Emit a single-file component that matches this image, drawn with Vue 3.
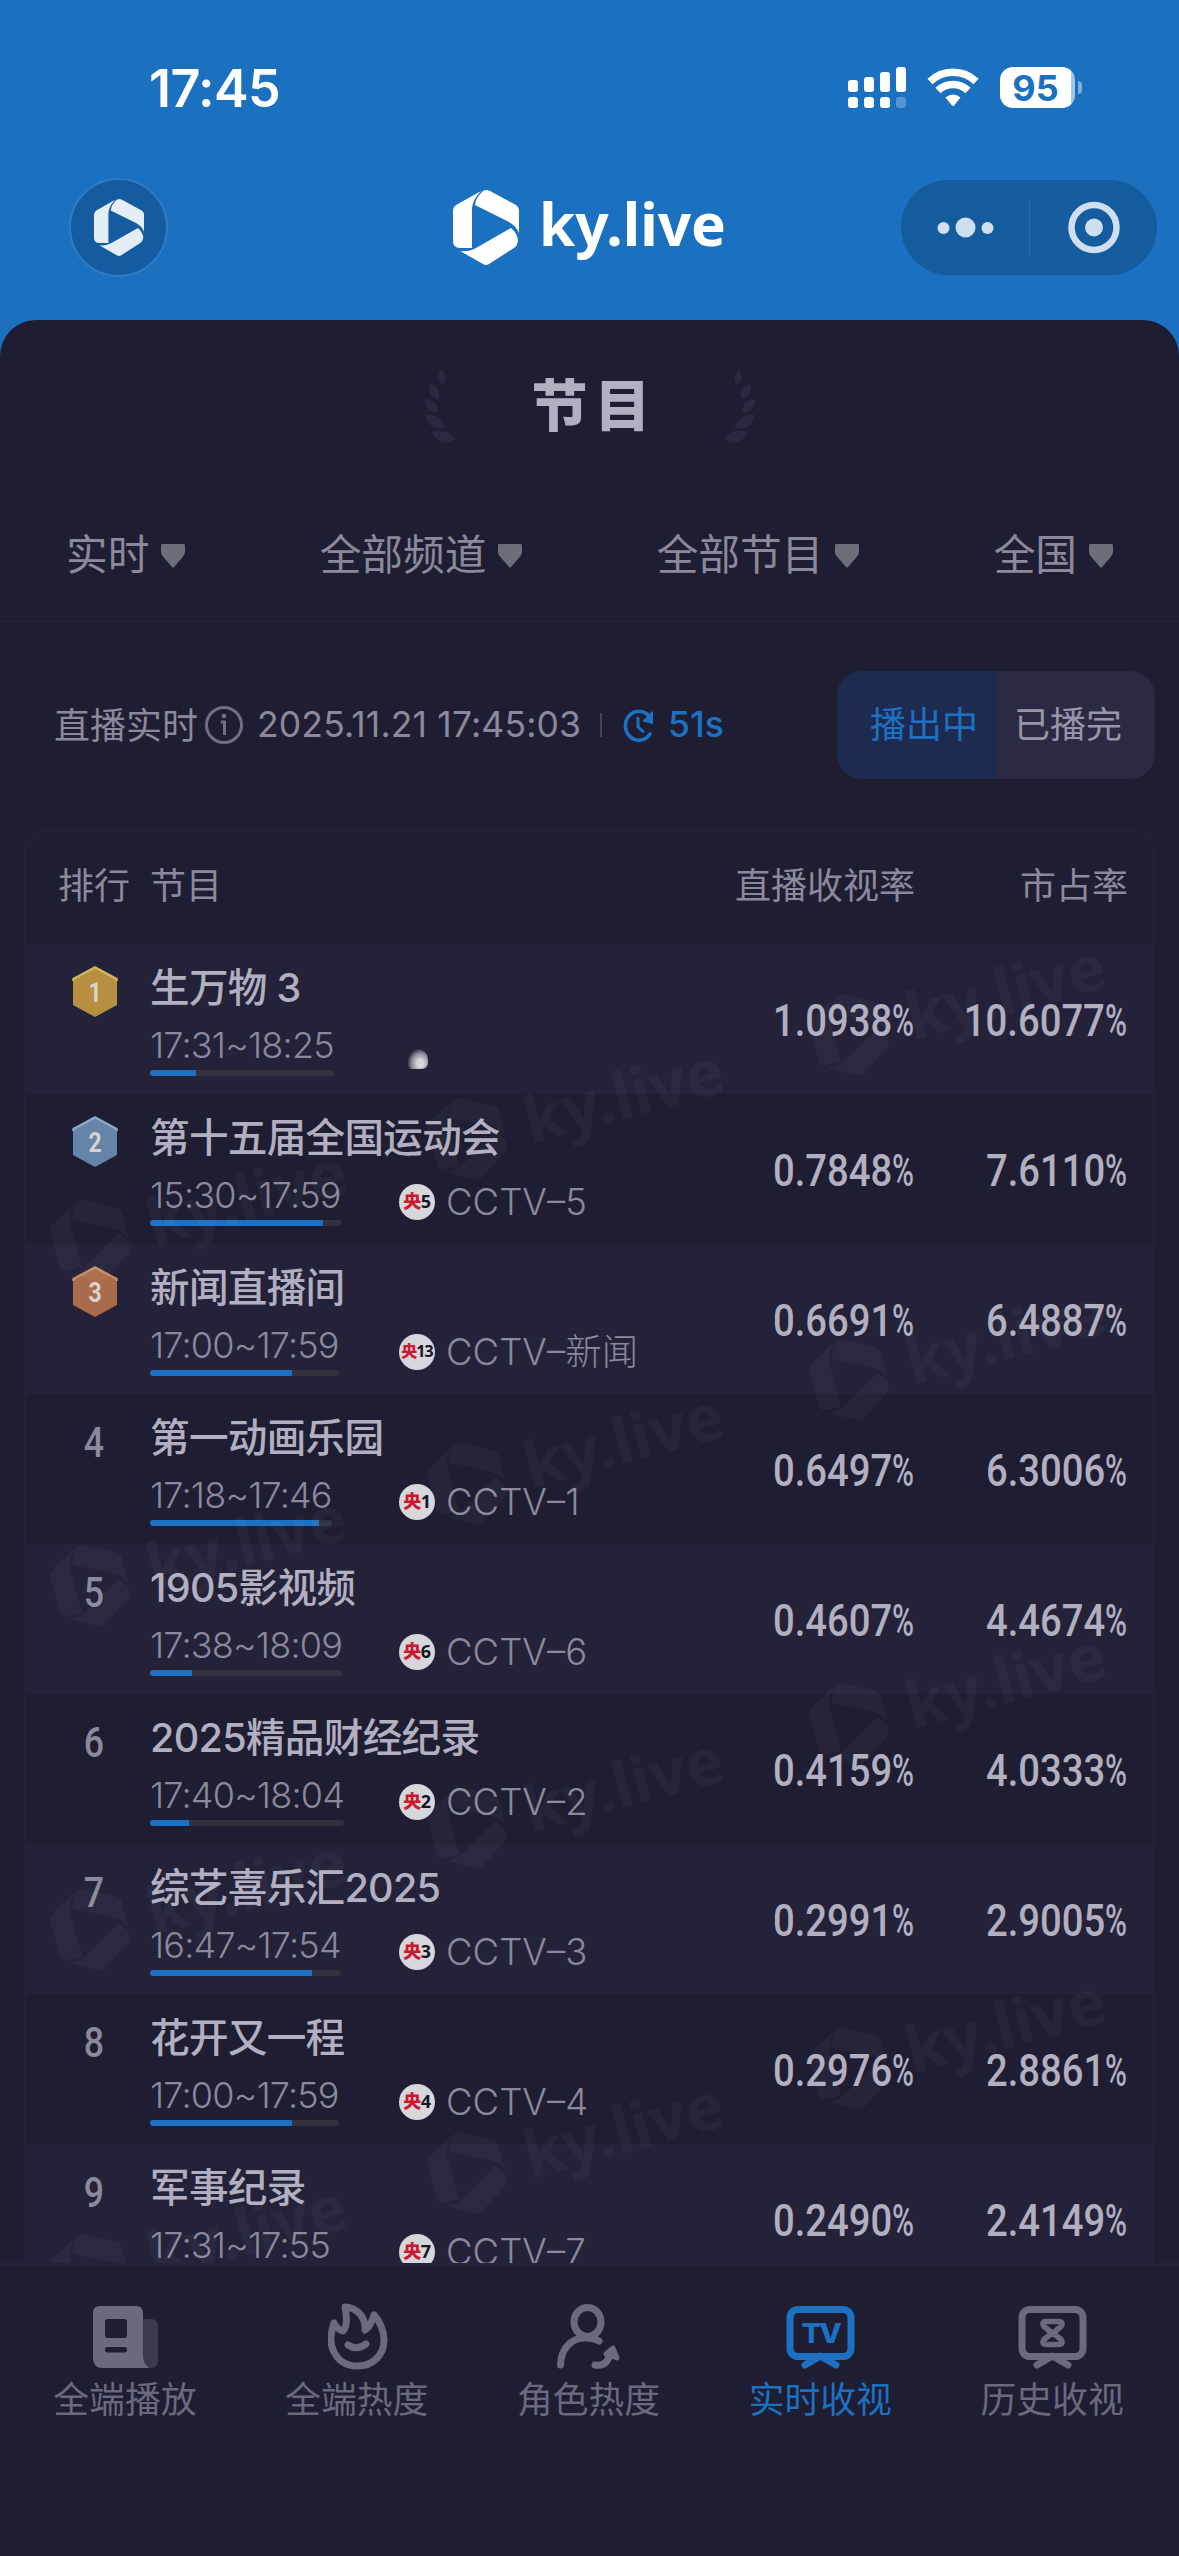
<template>
    <div class="screen">
        <svg class="defs" width="0" height="0">
            <symbol id="logo" viewBox="0 0 66 75">
                <path d="M28 1 L3 15 Q0 17 0 21 V51 Q0 58 7 58 H19 V18 Q20 9 28 1Z" />
                <path d="M30 1 Q33 -1 37 1 L63 15 Q66 17 66 20 V43 Q63 36 56 32 L22 15 Q23 7 30 1Z" />
                <path d="M58 38 Q64 43 65 50 Q65 55 61 58 L36 74 Q33 76 30 74 L7 61 Q16 62 23 58Z" />
            </symbol>
        </svg>

        <header class="top">
            <div class="status-bar">
                <span class="clock">17:45</span>
                <div class="status-icons">
                    <svg width="58" height="41" viewBox="0 0 58 41" fill="#fff">
                        <rect x="0" y="13" width="10" height="12" rx="3" />
                        <rect x="16" y="10" width="10" height="15" rx="3" />
                        <rect x="32" y="5" width="10" height="20" rx="3" />
                        <rect x="48" y="0" width="10" height="25" rx="3" />
                        <rect x="0" y="30" width="10" height="11" rx="3" />
                        <rect x="16" y="30" width="10" height="11" rx="3" />
                        <rect x="32" y="30" width="10" height="11" rx="3" />
                        <rect x="48" y="30" width="10" height="11" rx="3" opacity=".25" />
                    </svg>
                    <svg class="wifi" width="52" height="40" viewBox="0 0 52 40">
                        <g fill="none" stroke="#fff" stroke-width="7.5">
                            <path d="M3 13.500 A33 33 0 0 1 49 13.500" />
                            <path d="M11 22.500 A21.500 21.500 0 0 1 41 22.500" />
                        </g>
                        <path d="M18.500 29.500 Q26 23.500 33.500 29.500 L27.500 37 Q26 39 24.500 37Z" fill="#fff" />
                    </svg>
                    <div class="battery"><span>95</span></div>
                    <i class="battery-nub"></i>
                </div>
            </div>
            <div class="nav-bar">
                <div class="home-btn">
                    <svg width="50" height="57"><use href="#logo" /></svg>
                </div>
                <div class="brand">
                    <svg width="66" height="75"><use href="#logo" /></svg>
                    <span>ky.live</span>
                </div>
                <div class="capsule">
                    <svg width="256" height="95" viewBox="0 0 256 95">
                        <g fill="#cfdff0">
                            <circle cx="42.500" cy="48" r="6" />
                            <circle cx="64.500" cy="47.500" r="10" />
                            <circle cx="86.500" cy="48" r="6" />
                            <circle cx="193" cy="47.500" r="9" />
                        </g>
                        <path d="M128.500 18 V76" stroke="#2768a8" stroke-width="1" />
                        <circle cx="193" cy="47.500" r="22.500" fill="none" stroke="#cfdff0" stroke-width="6.500" />
                    </svg>
                </div>
            </div>
        </header>

        <main class="panel">
            <div class="title">
                <svg width="34" height="76" viewBox="0 0 34 76" class="laurel">
                    <path v-for="leaf in leaves" :key="leaf" :d="leaf" />
                </svg>
                <h1>节目</h1>
                <svg width="34" height="76" viewBox="0 0 34 76" class="laurel laurel-right">
                    <path v-for="leaf in leaves" :key="leaf" :d="leaf" />
                </svg>
            </div>

            <div class="filters">
                <div class="filter" v-for="item in filters" :key="item">
                    <span>{{ item }}</span>
                    <svg width="24" height="24" viewBox="0 0 24 24">
                        <path d="M1 0 H23 L24 1 V8 Q24 10 22.500 12 L13 23 Q12 24 11 23 L1.500 12 Q0 10 0 8 V1Z" fill="#6c6f7a" />
                    </svg>
                </div>
            </div>

            <div class="live-bar">
                <span class="live-label">直播实时</span>
                <svg class="info-icon" width="40" height="40" viewBox="0 0 40 40">
                    <circle cx="20" cy="20" r="17.500" fill="none" stroke="#706e80" stroke-width="3" />
                    <circle cx="20" cy="11" r="2.300" fill="#706e80" />
                    <path d="M17 17 H20.500 V30" fill="none" stroke="#706e80" stroke-width="3" />
                </svg>
                <span class="live-time">2025.11.21 17:45:03</span>
                <i class="live-split"></i>
                <svg class="refresh" width="32" height="34" viewBox="0 0 32 34">
                    <g fill="none" stroke="#1d71c2" stroke-width="3.600" stroke-linecap="round">
                        <path d="M26 8 A13.500 14.500 0 1 0 27 26" />
                        <path d="M15 10 V19 L20 23.500" stroke-width="3" />
                    </g>
                    <path d="M29.500 3.500 V15.500 L20 13Z" fill="#1d71c2" stroke="#1d71c2" stroke-linejoin="round" />
                </svg>
                <span class="countdown">51s</span>
                <div class="toggle">
                    <span class="toggle-item active">播出中</span>
                    <span class="toggle-item">已播完</span>
                </div>
            </div>

            <div class="table">
                <div class="table-head">
                    <span class="head-rank">排行</span>
                    <span class="head-name">节目</span>
                    <span>直播收视率</span>
                    <span class="head-share">市占率</span>
                </div>
                <div class="row" v-for="(item, index) in programs" :key="item.name">
                    <div class="rank">
                        <div v-if="index < 3" class="badge">
                            <svg width="46" height="52" viewBox="0 0 46 52">
                                <path d="M23 1 L45 13 V39 L23 51 L1 39 V13Z" :fill="medals[index].fill" />
                                <path d="M1.500 15 V13 L23 1.500 L44.500 13 V15" fill="none" :stroke="medals[index].edge" stroke-width="2.500" />
                            </svg>
                            <span>{{ index + 1 }}</span>
                        </div>
                        <span v-else class="rank-num">{{ index + 1 }}</span>
                    </div>
                    <div class="info">
                        <div class="name">{{ item.name }}</div>
                        <div class="meta">
                            <div class="time-col">
                                <div class="time">
                                    {{ item.time }}
                                    <div class="bar"><div class="bar-fill" :style="{ width: item.progress + '%' }"></div></div>
                                </div>
                            </div>
                            <div class="channel" v-if="item.channel">
                                <span class="channel-logo" :class="{ small: item.no.length > 1 }"><b>央</b>{{ item.no }}</span>
                                <span class="channel-name">{{ item.channel }}</span>
                            </div>
                            <i class="logo-loading" v-else></i>
                        </div>
                    </div>
                    <div class="num rate"><span>{{ item.rate }}<i>%</i></span></div>
                    <div class="num share"><span>{{ item.share }}<i>%</i></span></div>
                </div>
                <div class="watermark" v-for="mark in watermarks" :key="mark.x + '_' + mark.y" :style="{ left: mark.x + 'px', top: mark.y + 'px' }">
                    <svg width="74" height="84"><use href="#logo" /></svg>
                    <span>ky.live</span>
                </div>
            </div>
        </main>

        <footer class="tab-bar">
            <div class="tab">
                <svg width="66" height="68" viewBox="0 -3 66 68">
                    <path d="M50 13 H58 Q65 13 65 20 V55 Q65 62 58 62 H50Z" fill="#3b394e" />
                    <path fill-rule="evenodd" d="M7 0 H43 Q50 0 50 7 V50 Q50 57 56 62 H10 Q0 62 0 52 V7 Q0 0 7 0Z M15 13 Q12 13 12 16 V29 Q12 32 15 32 H31 Q34 32 34 29 V16 Q34 13 31 13Z M14.500 41 Q12 41 12 44 Q12 46.500 14.500 46.500 H31.500 Q34 46.500 34 44 Q34 41 31.500 41Z" fill="currentColor" />
                </svg>
                <span>全端播放</span>
            </div>
            <div class="tab">
                <svg width="60" height="68" viewBox="0 0 60 68" class="line">
                    <path d="M6 20 C2 32 2 42 6 49 C11 59 20 63 29 63 C45 63 56 52 56 37 C56 27 51 17 46 12 C44 18 42 24 37 27 C38 15 30 5 17 4 C19 14 19 24 15 28 C11 27 8 24 6 20Z" />
                    <path d="M20 42 Q29 48 38 41" />
                </svg>
                <span>全端热度</span>
            </div>
            <div class="tab">
                <svg width="64" height="68" viewBox="0 -2 64 68" class="line">
                    <ellipse cx="30.500" cy="17" rx="13.500" ry="14.500" />
                    <path d="M3.500 60 C4 42 16 32 30 33 Q37 33 42 36" />
                    <path d="M38 60 Q50 62 53 49" />
                    <path d="M56 43 L49 49 L60 53Z" fill="currentColor" stroke-width="5" />
                </svg>
                <span>角色热度</span>
            </div>
            <div class="tab active">
                <svg width="70" height="68" viewBox="0 -3 70 68" class="line">
                    <rect x="4" y="3.500" width="61" height="47" rx="8" />
                    <path d="M19 59 L34.500 50 L50 59" />
                    <text x="15.500" y="37" textLength="38" lengthAdjust="spacingAndGlyphs">TV</text>
                </svg>
                <span>实时收视</span>
            </div>
            <div class="tab">
                <svg width="70" height="68" viewBox="0 -3 70 68" class="line">
                    <rect x="4" y="3.500" width="61" height="47" rx="8" />
                    <path d="M19 59 L34.500 50 L50 59" />
                    <path class="glass" d="M28 15.500 H41 Q46 16 43 20.500 L35 27 L43 33.500 Q46 38 41 38.500 H28 Q23 38 26 33.500 L34 27 L26 20.500 Q23 16 28 15.500Z" />
                </svg>
                <span>历史收视</span>
            </div>
        </footer>
    </div>
</template>

<script setup>
import { ref, computed } from 'vue'

const filters = ['实时', '全部频道', '全部节目', '全国']

const leaves = [
    'M17 0 Q25 8 19 16 Q11 10 17 0Z',
    'M6 15 Q19 20 14 30 Q2 26 6 15Z',
    'M1 30 Q14 31 14 44 Q1 43 1 30Z',
    'M1 46 Q17 44 21 59 Q6 63 1 46Z',
    'M8 63 Q23 58 32 70 Q17 80 8 63Z'
]

const medals = [
    { fill: '#b68f40', edge: '#d1b35d' },
    { fill: '#6584a8', edge: '#8ea7c3' },
    { fill: '#aa6b4b', edge: '#c48b69' }
]

const programs = ref([
    { name: '生万物 3', time: '17:31~18:25', progress: 25, channel: '', no: '', rate: '1.0938', share: '10.6077' },
    { name: '第十五届全国运动会', time: '15:30~17:59', progress: 90.5, channel: 'CCTV–5', no: '5', rate: '0.7848', share: '7.6110' },
    { name: '新闻直播间', time: '17:00~17:59', progress: 75, channel: 'CCTV–新闻', no: '13', rate: '0.6691', share: '6.4887' },
    { name: '第一动画乐园', time: '17:18~17:46', progress: 93, channel: 'CCTV–1', no: '1', rate: '0.6497', share: '6.3006' },
    { name: '1905影视频', time: '17:38~18:09', progress: 22, channel: 'CCTV–6', no: '6', rate: '0.4607', share: '4.4674' },
    { name: '2025精品财经纪录', time: '17:40~18:04', progress: 20, channel: 'CCTV–2', no: '2', rate: '0.4159', share: '4.0333' },
    { name: '综艺喜乐汇2025', time: '16:47~17:54', progress: 85, channel: 'CCTV–3', no: '3', rate: '0.2991', share: '2.9005' },
    { name: '花开又一程', time: '17:00~17:59', progress: 75, channel: 'CCTV–4', no: '4', rate: '0.2976', share: '2.8861' },
    { name: '军事纪录', time: '17:31~17:55', progress: 58, channel: 'CCTV–7', no: '7', rate: '0.2490', share: '2.4149' }
])

// three staggered columns, repeated down the table
const watermarks = computed(() => {
    const columns = [{ x: 28, y: 368 }, { x: 405, y: 266 }, { x: 787, y: 162 }]
    return columns.flatMap(col => [0, 1, 2, 3].map(i => ({ x: col.x, y: col.y + i * 344.5 })))
})
</script>

<style>
body {
    background: #1f1d32;
}
</style>

<style scoped>
.screen {
    width: 1179px;
    height: 2556px;
    display: flex;
    flex-direction: column;
    overflow: hidden;
    background: #1b70c0;
    font-family: 'Inter', 'Noto Sans CJK SC', sans-serif;
    color: #b1afc0;
}
.screen svg {
    display: block;
    flex: none;
}
.defs {
    position: absolute;
}
.top {
    height: 320px;
    flex: none;
    color: #fff;
}
.status-bar {
    height: 175px;
    display: flex;
    justify-content: space-between;
    padding: 0 97px 0 149px;
    box-sizing: border-box;
}
.clock {
    font-size: 52px;
    font-weight: 600;
    line-height: 177px;
    letter-spacing: -.6px;
}
.status-icons {
    display: flex;
    align-items: center;
}
.wifi {
    margin: 0 21px 0 21px;
}
.battery {
    width: 75px;
    height: 41px;
    border-radius: 13px;
    background: linear-gradient(90deg, #fff 71px, #a4c6e6 71px);
    color: #1b70c0;
    font-size: 36px;
    font-weight: 700;
    line-height: 42px;
    text-align: center;
    text-indent: -4px;
}
.battery-nub {
    width: 4px;
    height: 13px;
    margin-left: 3px;
    border-radius: 0 6px 6px 0;
    background: #7fafdd;
}
.nav-bar {
    height: 104px;
    display: flex;
    align-items: center;
    padding: 0 22px 0 69px;
}
.home-btn {
    width: 95px;
    height: 95px;
    border: 2px solid #2c7cc6;
    border-radius: 50%;
    background: #145c9f;
    display: flex;
    align-items: center;
    justify-content: center;
    fill: #e4edf6;
}
.brand {
    display: flex;
    align-items: center;
    margin-left: 285px;
    fill: #fff;
}
.brand span {
    margin: -7px 0 0 20px;
    font: 700 58.500px/75px 'Noto Sans', sans-serif;
}
.capsule {
    width: 256px;
    height: 95px;
    margin-left: auto;
    border-radius: 48px;
    background: #155c9f;
}
.panel {
    flex: 1;
    min-height: 0;
    overflow: hidden;
    border-radius: 36px 36px 0 0;
    background: #1f1d32;
}
.title {
    height: 168px;
    display: flex;
    align-items: center;
    justify-content: center;
}
.title h1 {
    width: 264px;
    margin: 3px 0 0;
    font-size: 56px;
    font-weight: 900;
    line-height: 80px;
    letter-spacing: 7px;
    text-align: center;
    text-indent: 10px;
}
.laurel {
    margin-top: 6px;
    fill: #2b2941;
}
.laurel-right {
    transform: scaleX(-1);
}
.filters {
    height: 132px;
    display: flex;
    justify-content: space-between;
    padding: 0 66px;
    border-bottom: 2px solid #232139;
}
.filter {
    display: flex;
    align-items: center;
    gap: 12px;
    font-size: 41.700px;
    color: #8b899b;
}
.filter span {
    line-height: 60px;
    padding-top: 2px;
}
.filter svg {
    margin-top: 3px;
}
.live-bar {
    height: 205px;
    display: flex;
    align-items: center;
    padding: 0 24px 2px 54px;
    font-size: 36px;
    color: #8b899b;
}
.live-label {
    margin-top: -4px;
}
.info-icon {
    margin: 0 13px 0 6px;
}
.live-time {
    width: 324px;
    font-size: 35.500px;
    letter-spacing: .15px;
    white-space: nowrap;
}
.live-split {
    width: 2px;
    height: 24px;
    margin: 0 21px 0 19px;
    background: #454357;
}
.countdown {
    margin-left: 13px;
    color: #1d71c2;
    font-size: 35.500px;
    font-weight: 500;
}
.toggle {
    width: 318px;
    height: 108px;
    margin-left: auto;
    display: flex;
    overflow: hidden;
    border-radius: 25px;
    background: #2c2a43;
    font-size: 36px;
    line-height: 108px;
}
.toggle-item {
    box-sizing: border-box;
    padding-left: 17px;
    color: #9795a7;
}
.toggle-item.active {
    width: 160px;
    padding-left: 33px;
    background: #1e2b50;
    color: #1d71c2;
}
.table {
    position: relative;
    margin: 0 24px;
    border: 2px solid #232139;
    border-radius: 24px 24px 0 0;
    overflow: hidden;
}
.table-head {
    height: 113px;
    display: flex;
    padding: 0 25px 0 32px;
    font-size: 36px;
    line-height: 110px;
    color: #8b899b;
}
.head-rank {
    width: 92px;
}
.head-name {
    flex: 1;
}
.head-share {
    width: 213px;
    text-align: right;
}
.row {
    height: 150px;
    display: flex;
    padding-right: 26px;
}
.row:nth-child(even) {
    background: #242239;
}
.rank {
    width: 78px;
    padding: 22px 0 0 46px;
}
.badge {
    position: relative;
    width: 46px;
    height: 52px;
}
.badge span {
    position: absolute;
    inset: 0;
    font: 700 27px/54px Roboto, sans-serif;
    text-align: center;
    color: #d9d3d0;
    transform: scaleX(.85);
}
.rank-num {
    display: block;
    width: 44px;
    font: 500 42px/53px Roboto, sans-serif;
    text-align: center;
    color: #8b899b;
    transform: scaleX(.85);
}
.info {
    flex: 1;
    padding-top: 19px;
}
.name {
    font-size: 39.600px;
    font-weight: 500;
    line-height: 51px;
    letter-spacing: -.7px;
    white-space: nowrap;
}
.meta {
    display: flex;
    margin-top: 11px;
    font-size: 36px;
    font-weight: 300;
    color: #8b899b;
}
.time-col {
    width: 249px;
}
.time {
    display: inline-block;
    line-height: 40px;
    letter-spacing: -.8px;
}
.bar {
    height: 6px;
    margin-top: 5px;
    border-radius: 3px;
    overflow: hidden;
    background: #32313d;
}
.bar-fill {
    height: 100%;
    background: #1d71c2;
}
.channel {
    height: 36px;
    margin-top: 9px;
    display: flex;
    align-items: center;
    gap: 11px;
    white-space: nowrap;
}
.channel-name {
    height: 36px;
    font-size: 36.500px;
    line-height: 36px;
}
.channel-logo {
    width: 36px;
    height: 36px;
    border-radius: 50%;
    background: #d6d6dd;
    color: #17171d;
    font: 700 18px/35px 'Noto Sans', 'Noto Sans CJK SC', sans-serif;
    letter-spacing: -.5px;
    text-align: center;
}
.channel-logo b {
    color: #cb1a2d;
}
.channel-logo.small {
    font-size: 16px;
    letter-spacing: -1px;
}
.logo-loading {
    width: 20px;
    height: 20px;
    margin: 24px 0 0 9px;
    border-radius: 10px 10px 6px 4px;
    background: radial-gradient(ellipse at 62% 72%, #d8d7dd 0 18%, #8c8a98 50%, transparent 76%);
}
.num {
    font: 500 45px/154px Roboto, sans-serif;
    text-align: right;
}
.num span {
    display: inline-block;
    transform: scaleX(.85);
    transform-origin: right;
}
.num i {
    display: inline-block;
    width: 26px;
    font-style: normal;
    text-align: left;
    transform: scaleX(.78);
    transform-origin: left;
}
.share {
    width: 213px;
}
.watermark {
    position: absolute;
    display: flex;
    align-items: center;
    opacity: .03;
    fill: #fff;
    color: #fff;
    transform: rotate(-15deg);
    transform-origin: 37px 42px;
}
.watermark span {
    margin: -7px 0 0 22px;
    font: 700 64px/82px 'Noto Sans', sans-serif;
}
.tab-bar {
    height: 290px;
    flex: none;
    display: flex;
    padding: 0 11px 0 9px;
    border-top: 3px solid #242239;
    background: #1f1d32;
}
.tab {
    flex: 1;
    display: flex;
    flex-direction: column;
    align-items: center;
    padding-top: 37px;
    color: #6b697e;
    font-size: 35.800px;
}
.tab svg {
    margin-left: 2px;
}
.tab span {
    margin-top: 4px;
    line-height: 50px;
}
.tab.active {
    color: #1d71c2;
}
.line {
    fill: none;
    stroke: currentColor;
    stroke-width: 7px;
    stroke-linecap: round;
    stroke-linejoin: round;
}
.line text {
    font: 800 27px Inter, sans-serif;
    letter-spacing: -2px;
    fill: currentColor;
    stroke: none;
}
.line .glass {
    stroke-width: 5.500px;
}
</style>
